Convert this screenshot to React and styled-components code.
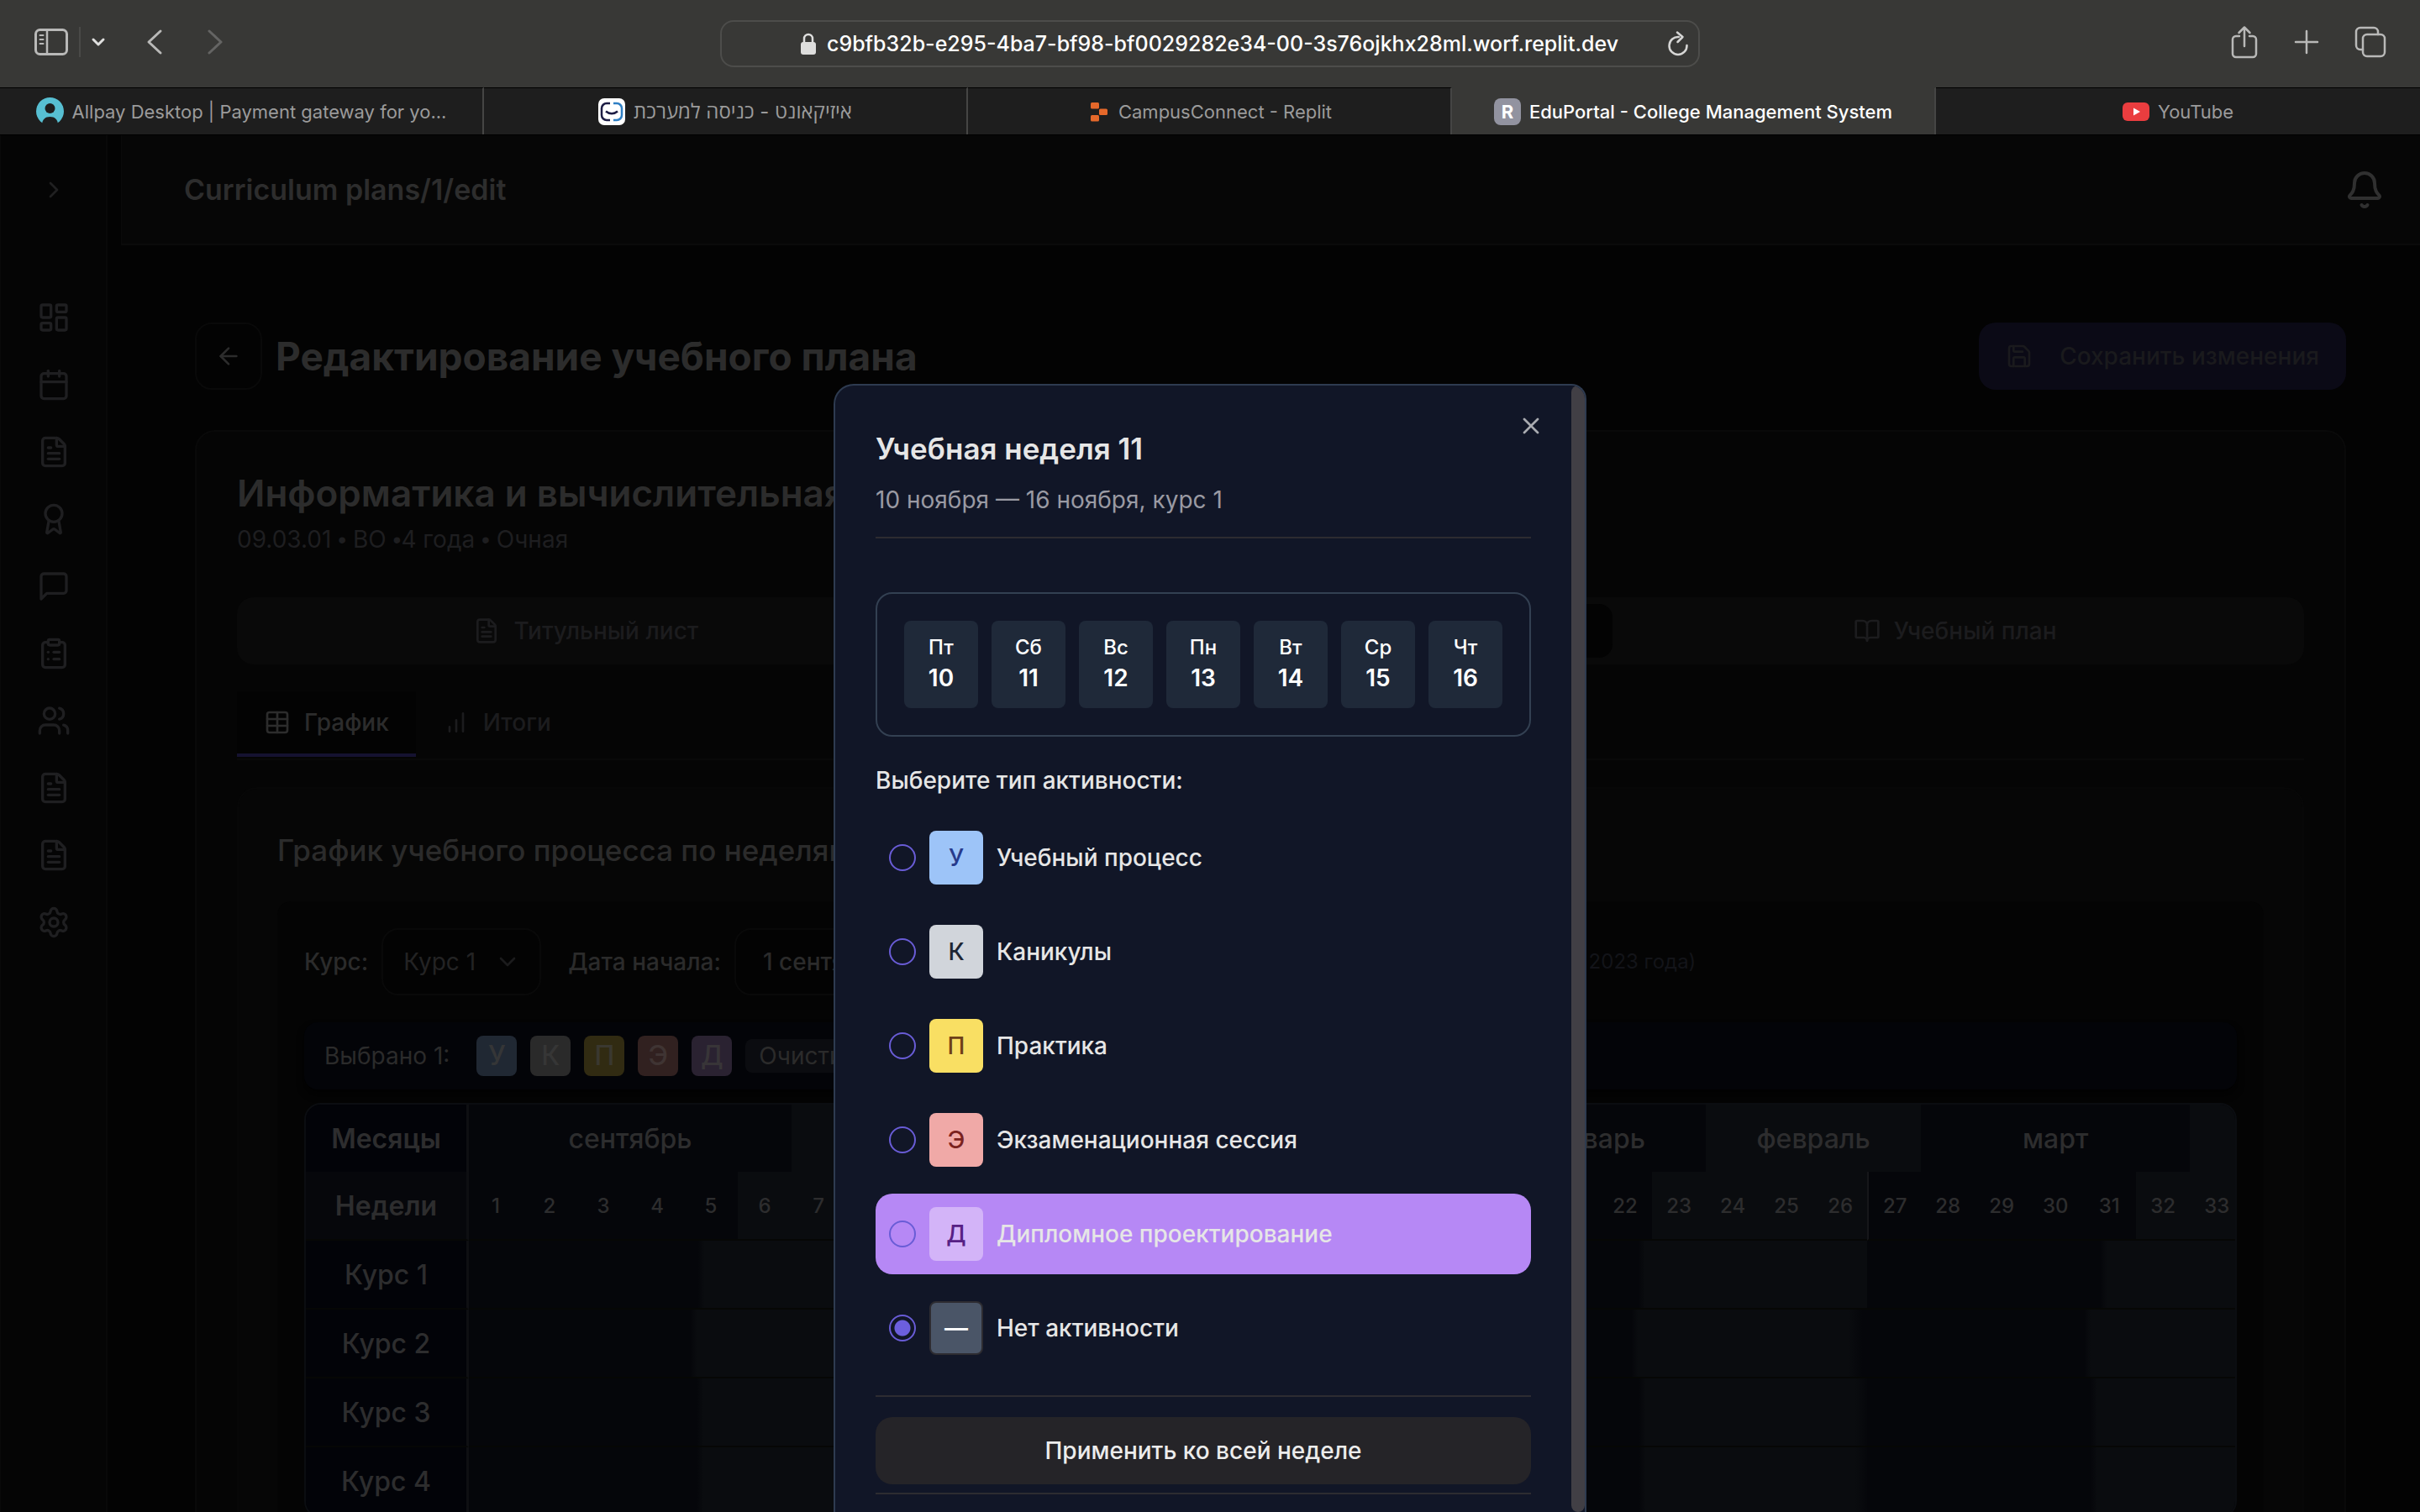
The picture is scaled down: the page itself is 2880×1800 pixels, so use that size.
import React, { useState } from "react";
import styled, { createGlobalStyle, css } from "styled-components";
import {
  ArrowLeft,
  Award,
  Bell,
  BookOpen,
  Calendar,
  CalendarDays,
  ChevronDown,
  ChevronRight,
  ClipboardList,
  FileText,
  LayoutDashboard,
  Save,
  Settings,
  Table as TableIcon,
  Users,
  X,
} from "lucide-react";

const GlobalStyle = createGlobalStyle`
  *, *::before, *::after { box-sizing: border-box; }
  html, body { margin: 0; background: #030303; }
  body, button, input, select {
    font-family: Inter, "Open Sans", "Liberation Sans", sans-serif;
    font-optical-sizing: none;
  }
  button, select { margin: 0; padding: 0; border: 0; background: none; color: inherit; }
  h1, h2, h3, p { margin: 0; }
`;

const Screen = styled.div`
  height: 100vh;
  display: flex;
  flex-direction: column;
  overflow: hidden;
`;

/* ---------- browser window ---------- */

const Toolbar = styled.header`
  flex: none;
  height: 104px;
  padding: 0 40px 4px;
  display: grid;
  grid-template-columns: 1fr minmax(0, 1166px) 1fr;
  align-items: center;
  background: #383836;
  color: #b9b9b8;
  svg { display: block; }
`;

const ToolGroup = styled.div`
  display: flex;
  align-items: center;
  gap: ${(p) => p.$gap}px;
  justify-content: ${(p) => (p.$end ? "flex-end" : "flex-start")};
`;

const ToolButton = styled.button`
  display: flex;
  color: ${(p) => (p.$dim ? "#646463" : "#b9b9b8")};
`;

const ToolDivider = styled.span`
  width: 2px;
  height: 36px;
  background: #4a4a48;
`;

const NavButtons = styled.div`
  display: flex;
  gap: 40px;
  margin-left: 30px;
`;

const AddressBar = styled.div`
  height: 56px;
  margin-top: 4px;
  padding: 0 10px 0 36px;
  display: flex;
  align-items: center;
  border: 2px solid #4d4d4b;
  border-radius: 16px;
  color: #fff;
`;

const Address = styled.div`
  flex: 1;
  display: flex;
  align-items: center;
  justify-content: center;
  gap: 12px;
  font-size: 25px;
  line-height: 32px;
  font-weight: 500;
  white-space: nowrap;
`;

const TabStrip = styled.nav`
  flex: none;
  height: 57px;
  display: grid;
  grid-template-columns: repeat(5, 1fr);
  background: #1e1e1e;
  border-bottom: 1px solid #000;
`;

const BrowserTab = styled.button`
  display: flex;
  align-items: center;
  justify-content: center;
  gap: 10px;
  font-size: ${(p) => (p.$large ? 24 : 22)}px;
  line-height: 28px;
  font-weight: ${(p) => (p.$active ? 500 : 400)};
  white-space: nowrap;
  color: ${(p) => (p.$active ? "#fff" : "#9b9b9b")};
  background: ${(p) => (p.$active ? "#383836" : "transparent")};
  border-top: 1px solid ${(p) => (p.$active ? "#383836" : "#000")};
  border-right: 2px solid #454544;
  &:last-child { border-right: 0; }
  svg { display: block; flex: none; }
`;

const LetterFavicon = styled.span`
  width: 32px;
  height: 32px;
  border-radius: 8px;
  background: #9293a0;
  color: #fff;
  font-size: 22px;
  line-height: 32px;
  font-weight: 700;
  text-align: center;
`;

/* ---------- application frame ---------- */

const Viewport = styled.div`
  position: relative;
  flex: 1;
  min-height: 0;
  display: flex;
  overflow: hidden;
  background: #030303;
`;

const Sidebar = styled.aside`
  flex: none;
  width: 128px;
  display: flex;
  flex-direction: column;
  align-items: center;
  background: #050505;
  border-right: 2px solid #090909;
  border-left: 1px solid #0a0a0a;
  color: #1f1f21;
`;

const CollapseButton = styled.button`
  height: 130px;
  display: flex;
  align-items: center;
  color: #202021;
`;

const SideNav = styled.nav`
  margin-top: 47px;
  display: flex;
  flex-direction: column;
`;

const SideLink = styled.a`
  height: 80px;
  display: flex;
  align-items: center;
  color: inherit;
`;

const Main = styled.main`
  flex: 1;
  min-width: 0;
  margin-left: 16px;
`;

const AppHeader = styled.header`
  height: 131px;
  padding: 0 42px 0 74px;
  display: flex;
  align-items: center;
  justify-content: space-between;
  background: #060606;
  border-bottom: 2px solid #0a0a0a;
  border-left: 1px solid #0a0a0a;
  color: #2d2d2d;
`;

const Crumb = styled.h2`
  font-size: 34px;
  line-height: 48px;
  font-weight: 600;
`;

const BellButton = styled.button`
  display: flex;
  color: #303030;
`;

const Content = styled.div`
  padding: 92px 88px 0;
`;

const TitleRow = styled.div`
  height: 80px;
  display: flex;
  align-items: center;
  gap: 16px;
`;

const BackButton = styled.button`
  width: 80px;
  height: 80px;
  display: flex;
  align-items: center;
  justify-content: center;
  border: 2px solid #090909;
  border-radius: 20px;
  color: #2c2c2c;
`;

const PageTitle = styled.h1`
  flex: 1;
  font-size: 46px;
  line-height: 64px;
  font-weight: 700;
  color: #2c2c2c;
`;

const SaveButton = styled.button`
  height: 80px;
  padding: 0 32px;
  display: flex;
  align-items: center;
  gap: 32px;
  border-radius: 20px;
  background: #0b0a16;
  color: #1a1a1d;
  font-size: 28px;
  line-height: 40px;
  font-weight: 500;
`;

const PlanCard = styled.section`
  margin-top: 48px;
  padding: 48px;
  border: 2px solid #090909;
  border-radius: 24px;
  background: #050505;
`;

const PlanTitle = styled.h2`
  font-size: 44px;
  line-height: 50px;
  font-weight: 600;
  color: #2c2c2c;
`;

const PlanMeta = styled.p`
  margin-top: 10px;
  font-size: 28px;
  line-height: 40px;
  color: #1e1e20;
`;

const Dot = styled.span`
  font-family: "Liberation Sans", sans-serif;
`;

const TabList = styled.div`
  height: 80px;
  margin-top: 48px;
  padding: 8px;
  display: grid;
  grid-template-columns: repeat(3, 1fr);
  border-radius: 20px;
  background: #090909;
`;

const Tab = styled.button`
  display: flex;
  align-items: center;
  justify-content: center;
  gap: 16px;
  border-radius: 16px;
  font-size: 28px;
  line-height: 40px;
  font-weight: 500;
  background: ${(p) => (p.$active ? "#030303" : "transparent")};
  color: ${(p) => (p.$active ? "#2c2c2c" : "#1c1c1e")};
`;

const SubTabList = styled.div`
  margin-top: 32px;
  padding-bottom: 2px;
  display: flex;
  border-bottom: 2px solid #090909;
`;

const SubTab = styled.button`
  height: 78px;
  padding: 0 32px;
  display: flex;
  align-items: center;
  gap: 16px;
  font-size: 28px;
  line-height: 40px;
  font-weight: 500;
  background: ${(p) => (p.$active ? "#030303" : "transparent")};
  border-bottom: 4px solid ${(p) => (p.$active ? "#151230" : "transparent")};
  color: ${(p) => (p.$active ? "#2c2c2c" : "#1c1c1e")};
`;

const ScheduleCard = styled.section`
  margin-top: 32px;
  padding: 48px 46px 0;
  border: 2px solid #070707;
  border-radius: 24px;
  background: #060606;
`;

const ScheduleTitle = styled.h3`
  font-size: 35px;
  line-height: 50px;
  font-weight: 500;
  color: #2b2b2b;
`;

const SchedulePanel = styled.div`
  margin: 36px 0 0;
  padding: 32px;
  border-radius: 16px;
  background: #040404;
`;

const FilterRow = styled.div`
  height: 80px;
  display: flex;
  align-items: center;
  font-size: 28px;
  line-height: 40px;
  font-weight: 500;
  color: #2b2b2b;
  white-space: nowrap;
`;

const SelectBox = styled.div`
  position: relative;
  margin: 0 32px 0 16px;
  color: #232324;
  svg {
    position: absolute;
    right: 24px;
    top: 24px;
    color: #1b1b1c;
    pointer-events: none;
  }
`;

const fieldStyle = css`
  height: 80px;
  border: 2px solid #090909;
  border-radius: 20px;
  background: #030303;
  color: inherit;
  font-size: 28px;
  line-height: 40px;
`;

const CourseSelect = styled.select`
  ${fieldStyle}
  appearance: none;
  width: 190px;
  padding: 0 24px;
`;

const DateButton = styled.button`
  ${fieldStyle}
  width: 860px;
  margin: 0 16px;
  padding: 0 32px;
  text-align: left;
  font-weight: 500;
`;

const Hint = styled.span`
  font-size: 24px;
  font-weight: 400;
  color: #131419;
`;

const SelectionBar = styled.div`
  height: 80px;
  margin-top: 32px;
  padding: 0 24px;
  display: flex;
  align-items: center;
  gap: 16px;
  border-radius: 16px;
  background: #030408;
  box-shadow: 0 6px 8px #020202;
  font-size: 28px;
  line-height: 40px;
  color: #2b2b2b;
`;

const SelectionCount = styled.span`
  margin-right: 16px;
`;

const MiniBadge = styled.button`
  width: 48px;
  height: 48px;
  border-radius: 8px;
  font-size: 32px;
  line-height: 48px;
  font-weight: 500;
  text-align: center;
  background: ${(p) => p.$bg};
  color: ${(p) => p.$fg};
`;

const ClearButton = styled.button`
  height: 40px;
  padding: 0 16px;
  border-radius: 8px;
  background: #0b0c10;
  font-size: 28px;
  line-height: 40px;
`;

const TableFrame = styled.div`
  margin-top: 16px;
  overflow: hidden;
  border: 2px solid #0b0d11;
  border-radius: 20px;
`;

const WeekTable = styled.table`
  table-layout: fixed;
  width: 2498px;
  border-collapse: separate;
  border-spacing: 0;
  font-size: 32px;
  line-height: 40px;
  color: #2d2d2e;
  th, td { padding: 2px 0 0; font-weight: 500; }
`;

const LabelCol = styled.col`
  width: 194px;
`;

const WeekCol = styled.col`
  width: 64px;
`;

const RowLabel = styled.th`
  height: ${(p) => (p.$tall ? 82 : 80)}px;
  background: ${(p) => (p.$raised ? "#06070b" : "#020308")};
  border-right: 3px solid #0e0f12;
  border-bottom: ${(p) => (p.$tall ? "2px solid #060705" : 0)};
  && { font-weight: ${(p) => (p.$strong ? 600 : 500)}; }
`;

const DARK = "#05060a";
const LIGHT = "#0a0c0f";

const MonthCell = styled.th`
  background: ${(p) => (p.$light ? LIGHT : DARK)};
`;

const WeekCell = styled.th`
  font-size: 24px;
  background: ${(p) => (p.$light ? LIGHT : DARK)};
  border-bottom: 2px solid #060705;
  border-left: ${(p) => (p.$mark ? "2px solid #16171a" : 0)};
`;

const DayCell = styled.td`
  background: ${(p) => p.$fill};
  border-bottom: 2px solid #060705;
`;

/* ---------- week dialog ---------- */

const Overlay = styled.div`
  position: absolute;
  inset: 0;
  padding-top: 296px;
  display: flex;
  justify-content: center;
`;

const Dialog = styled.div`
  position: relative;
  width: 896px;
  display: flex;
  overflow: hidden;
  border: 2px solid #2e3b50;
  border-bottom: 0;
  border-radius: 24px 18px 0 0;
  background: #111627;
  color: #e6e6e6;
`;

const DialogBody = styled.div`
  flex: 1;
  padding: 48px 48px 0;
  display: flex;
  flex-direction: column;
`;

const ScrollThumb = styled.div`
  width: 16px;
  border-radius: 8px;
  background: #413f45;
`;

const CloseButton = styled.button`
  position: absolute;
  top: 32px;
  right: 48px;
  display: flex;
  color: #a9abb0;
`;

const DialogHead = styled.div`
  padding-bottom: 24px;
  border-bottom: 2px solid #2d2c31;
`;

const DialogTitle = styled.h2`
  font-size: 35px;
  line-height: 54px;
  font-weight: 600;
`;

const DialogText = styled.p`
  margin-top: 14px;
  font-size: 28px;
  line-height: 40px;
  color: #9a9aa3;
`;

const DayRow = styled.div`
  margin-top: 64px;
  padding: 32px;
  display: grid;
  grid-template-columns: repeat(7, 1fr);
  gap: 16px;
  border: 2px solid #334052;
  border-radius: 20px;
`;

const DayTile = styled.button`
  height: 104px;
  padding: 16px 0;
  display: flex;
  flex-direction: column;
  align-items: center;
  border-radius: 8px;
  background: #1f2939;
  color: #fff;
`;

const DayName = styled.span`
  font-size: 24px;
  line-height: 32px;
  font-weight: 500;
`;

const DayNumber = styled.span`
  font-size: 28px;
  line-height: 40px;
  font-weight: 600;
`;

const ActivityGroup = styled.fieldset`
  margin: 32px 0 0;
  padding: 0;
  border: 0;
  display: flex;
  flex-direction: column;
  gap: 16px;
`;

const ActivityLegend = styled.legend`
  padding: 0;
  margin-bottom: 24px;
  font-size: 28px;
  line-height: 40px;
  font-weight: 500;
`;

const ActivityRow = styled.label`
  height: 96px;
  padding: 16px;
  display: flex;
  align-items: center;
  gap: 16px;
  border-radius: 20px;
  font-size: 28px;
  line-height: 40px;
  font-weight: 500;
  background: ${(p) => (p.$hovered ? "#b688f5" : "transparent")};
`;

const Radio = styled.input`
  appearance: none;
  width: 32px;
  height: 32px;
  margin: 0;
  border: 2px solid #695cd6;
  border-radius: 50%;
  &:checked {
    background: radial-gradient(circle, #6c5fdd 9px, transparent 10px);
  }
`;

const ActivityBadge = styled.span`
  width: 64px;
  height: 64px;
  display: flex;
  align-items: center;
  justify-content: center;
  border-radius: 8px;
  border: ${(p) => (p.$outlined ? "2px solid #2d2c31" : 0)};
  background: ${(p) => p.$bg};
  color: ${(p) => p.$fg};
`;

const DialogFoot = styled.div`
  margin-top: 32px;
  padding: 24px 0 10px;
  border-top: 2px solid #2d2c31;
  border-bottom: 2px solid #2d2c31;
`;

const ApplyButton = styled.button`
  width: 100%;
  height: 80px;
  border-radius: 20px;
  background: #252428;
  color: #ececec;
  font-size: 28px;
  line-height: 40px;
  font-weight: 500;
`;

/* ---------- data ---------- */

const MESSAGE_PATH = "M21 15a2 2 0 0 1-2 2H7l-4 4V5a2 2 0 0 1 2-2h14a2 2 0 0 1 2 2z";

const MessageIcon = () => (
  <svg width="40" height="40" viewBox="0 0 24 24" fill="none" stroke="currentColor" strokeWidth="2" strokeLinecap="round" strokeLinejoin="round">
    <path d={MESSAGE_PATH} />
  </svg>
);

const BarsIcon = () => (
  <svg width="32" height="32" viewBox="0 0 24 24" fill="none" stroke="currentColor" strokeWidth="2" strokeLinecap="round">
    <path d="M12 20V10M18 20V4M6 20v-4" />
  </svg>
);

const sideLinks = [
  ["Панель", LayoutDashboard],
  ["Расписание", Calendar],
  ["Задания", FileText],
  ["Оценки", Award],
  ["Сообщения", MessageIcon],
  ["Заявки", ClipboardList],
  ["Пользователи", Users],
  ["Документы", FileText],
  ["Учебные планы", FileText],
  ["Настройки", Settings],
];

const months = [
  ["сентябрь", 6],
  ["октябрь", 4],
  ["ноябрь", 4],
  ["декабрь", 5],
  ["январь", 4],
  ["февраль", 4],
  ["март", 5],
  ["апрель", 4],
];

const lightWeeks = [[6, 9], [14, 18], [23, 26], [32, 36]];
const isLight = (week) => lightWeeks.some(([from, to]) => week >= from && week <= to);
const weeks = Array.from({ length: 36 }, (_, i) => i + 1);

const toLight = (at) => `linear-gradient(90deg, ${DARK} ${at}%, ${LIGHT} ${at + 12}%)`;
const toDark = (at) => `linear-gradient(90deg, ${LIGHT} ${at}%, ${DARK} ${at + 26}%)`;

const courses = [
  { name: "Курс 1", split: { 5: toLight(26), 22: toLight(75), 31: toLight(34) } },
  { name: "Курс 2", split: { 5: toLight(12), 22: toLight(62), 26: toDark(66), 31: toLight(4) } },
  { name: "Курс 3", split: { 5: toLight(24), 22: toLight(76), 26: toDark(78), 31: toLight(16) } },
  { name: "Курс 4", split: { 5: toLight(24), 22: toLight(76), 26: toDark(78), 31: toLight(16) } },
];

const miniBadges = [
  ["У", "#202833", "#353637"],
  ["К", "#2a2a2a", "#363636"],
  ["П", "#312b12", "#3a3830"],
  ["Э", "#312120", "#3f3433"],
  ["Д", "#2a2231", "#383538"],
];

const days = [["Пт", 10], ["Сб", 11], ["Вс", 12], ["Пн", 13], ["Вт", 14], ["Ср", 15], ["Чт", 16]];

const activities = [
  { code: "У", name: "Учебный процесс", bg: "#9dc4f8", fg: "#273a8c" },
  { code: "К", name: "Каникулы", bg: "#d1d5db", fg: "#1e2633" },
  { code: "П", name: "Практика", bg: "#f9df63", fg: "#6e4018" },
  { code: "Э", name: "Экзаменационная сессия", bg: "#f0a9a7", fg: "#7b2220" },
  { code: "Д", name: "Дипломное проектирование", bg: "#d3b4f8", fg: "#572085", hovered: true },
  { code: "—", name: "Нет активности", bg: "#4a5567", fg: "#ffffff", outlined: true },
];

/* ---------- parts ---------- */

const line = { fill: "none", stroke: "currentColor", strokeLinecap: "round", strokeLinejoin: "round" };

function BrowserBar() {
  return (
    <Toolbar>
      <ToolGroup $gap={12}>
        <ToolButton aria-label="Sidebar">
          <svg width="42" height="34" viewBox="0 0 42 34" {...line} strokeWidth="3">
            <rect x="2.5" y="2.5" width="37" height="29" rx="5" />
            <path d="M16 3v28" strokeWidth="2.5" />
            <path d="M7.5 9h4M7.5 14h4M7.5 19h4" strokeWidth="2" />
          </svg>
        </ToolButton>
        <ToolDivider />
        <ToolButton aria-label="Tab groups">
          <svg width="18" height="12" viewBox="0 0 18 12" {...line} stroke="#e0e0df" strokeWidth="3">
            <path d="M3 3l6 6 6-6" />
          </svg>
        </ToolButton>
        <NavButtons>
          <ToolButton aria-label="Back">
            <svg width="32" height="32" viewBox="0 0 32 32" {...line} strokeWidth="3">
              <path d="M23 3L9 16l14 13" />
            </svg>
          </ToolButton>
          <ToolButton aria-label="Forward" $dim>
            <svg width="32" height="32" viewBox="0 0 32 32" {...line} strokeWidth="3">
              <path d="M9 3l14 13L9 29" />
            </svg>
          </ToolButton>
        </NavButtons>
      </ToolGroup>
      <AddressBar>
        <Address>
          <svg width="20" height="28" viewBox="0 0 20 28">
            <path d="M5 13V8a5 5 0 0 1 10 0v5" fill="none" stroke="#dededd" strokeWidth="2.5" />
            <rect x="1" y="12" width="18" height="15" rx="3" fill="#dededd" />
          </svg>
          c9bfb32b-e295-4ba7-bf98-bf0029282e34-00-3s76ojkhx28ml.worf.replit.dev
        </Address>
        <ToolButton aria-label="Reload">
          <svg width="28" height="32" viewBox="0 0 28 32" {...line} stroke="#d6d6d5" strokeWidth="2.5">
            <path d="M15 8a10.500 10.500 0 1 0 9.500 10" />
            <path d="M13 2.500l6.500 5.500-6 6" />
          </svg>
        </ToolButton>
      </AddressBar>
      <ToolGroup $gap={42} $end>
        <ToolButton aria-label="Share">
          <svg width="34" height="40" viewBox="0 0 34 40" {...line} strokeWidth="2.5">
            <path d="M11 13H7a4 4 0 0 0-4 4v17a4 4 0 0 0 4 4h20a4 4 0 0 0 4-4V17a4 4 0 0 0-4-4h-4" />
            <path d="M17 25V3M10.500 9L17 2.500 23.500 9" />
          </svg>
        </ToolButton>
        <ToolButton aria-label="New tab">
          <svg width="30" height="30" viewBox="0 0 30 30" {...line} strokeWidth="2.5">
            <path d="M15 2v26M2 15h26" />
          </svg>
        </ToolButton>
        <ToolButton aria-label="All tabs">
          <svg width="38" height="38" viewBox="0 0 38 38" {...line} strokeWidth="2.5">
            <rect x="10" y="10" width="26" height="26" rx="5" />
            <path d="M10 28H7a5 5 0 0 1-5-5V7a5 5 0 0 1 5-5h16a5 5 0 0 1 5 5v3" />
          </svg>
        </ToolButton>
      </ToolGroup>
    </Toolbar>
  );
}

function BrowserTabs() {
  return (
    <TabStrip>
      <BrowserTab>
        <svg width="33" height="33" viewBox="0 0 33 33">
          <circle cx="16.500" cy="16.500" r="16.500" fill="#57bfd2" />
          <circle cx="16.500" cy="13" r="6" fill="#1e1e1e" />
          <path d="M7 33c0-7 4-10 9.500-10S26 26 26 33z" fill="#1e1e1e" />
        </svg>
        Allpay Desktop | Payment gateway for yo...
      </BrowserTab>
      <BrowserTab $large>
        <svg width="32" height="32" viewBox="0 0 32 32" fill="none" strokeWidth="2.5">
          <rect width="32" height="32" rx="7" fill="#fff" />
          <path d="M14 6h-4a6 6 0 0 0-6 6v8a6 6 0 0 0 6 6h4" stroke="#1c1c44" />
          <path d="M18 6h4a6 6 0 0 1 6 6v8a6 6 0 0 1-6 6h-4" stroke="#2f7fc4" />
          <path d="M9 15.500c4 3.500 10 3.500 14 0" stroke="#1c1c44" />
        </svg>
        <span dir="rtl">איזיקאונט - כניסה למערכת</span>
      </BrowserTab>
      <BrowserTab>
        <svg width="28" height="28" viewBox="0 0 28 28" fill="#e5682a">
          <rect x="5" y="3" width="10" height="7.500" rx="1.500" />
          <rect x="15" y="10.500" width="10" height="7.500" rx="1.500" />
          <rect x="5" y="18" width="10" height="7.500" rx="1.500" />
        </svg>
        CampusConnect - Replit
      </BrowserTab>
      <BrowserTab $active>
        <LetterFavicon>R</LetterFavicon>
        EduPortal - College Management System
      </BrowserTab>
      <BrowserTab>
        <svg width="32" height="24" viewBox="0 0 32 24">
          <rect y="1" width="32" height="22" rx="6" fill="#ea3d3f" />
          <path d="M13 7.500l8 4.500-8 4.500z" fill="#fff" />
        </svg>
        YouTube
      </BrowserTab>
    </TabStrip>
  );
}

function AppSidebar() {
  return (
    <Sidebar>
      <CollapseButton aria-label="Развернуть меню"><ChevronRight size={32} /></CollapseButton>
      <SideNav>
        {sideLinks.map(([name, Icon]) => (
          <SideLink key={name} href="#" aria-label={name}><Icon size={40} /></SideLink>
        ))}
      </SideNav>
    </Sidebar>
  );
}

function WeekSchedule() {
  return (
    <TableFrame>
      <WeekTable>
        <colgroup>
          <LabelCol />
          {weeks.map((week) => <WeekCol key={week} />)}
        </colgroup>
        <thead>
          <tr>
            <RowLabel scope="row" $strong>Месяцы</RowLabel>
            {months.map(([name, span], i) => (
              <MonthCell key={name} colSpan={span} $light={i % 2 === 1}>{name}</MonthCell>
            ))}
          </tr>
          <tr>
            <RowLabel scope="row" $strong $raised $tall>Недели</RowLabel>
            {weeks.map((week) => (
              <WeekCell key={week} $light={isLight(week)} $mark={week === 27}>{week}</WeekCell>
            ))}
          </tr>
        </thead>
        <tbody>
          {courses.map(({ name, split }) => (
            <tr key={name}>
              <RowLabel scope="row" $tall>{name}</RowLabel>
              {weeks.map((week) => (
                <DayCell key={week} $fill={split[week] || (isLight(week) ? LIGHT : DARK)} />
              ))}
            </tr>
          ))}
        </tbody>
      </WeekTable>
    </TableFrame>
  );
}

function PlanEditor() {
  return (
    <Content>
      <TitleRow>
        <BackButton aria-label="Назад"><ArrowLeft size={32} /></BackButton>
        <PageTitle>Редактирование учебного плана</PageTitle>
        <SaveButton><Save size={32} />Сохранить изменения</SaveButton>
      </TitleRow>
      <PlanCard>
        <PlanTitle>Информатика и вычислительная техника</PlanTitle>
        <PlanMeta>
          09.03.01 <Dot>•</Dot> ВО <Dot>•</Dot>4 года <Dot>•</Dot> Очная
        </PlanMeta>
        <TabList>
          <Tab><FileText size={32} />Титульный лист</Tab>
          <Tab $active><CalendarDays size={32} />Учебный график</Tab>
          <Tab><BookOpen size={32} />Учебный план</Tab>
        </TabList>
        <SubTabList>
          <SubTab $active><TableIcon size={32} />График</SubTab>
          <SubTab><BarsIcon />Итоги</SubTab>
        </SubTabList>
        <ScheduleCard>
          <ScheduleTitle>График учебного процесса по неделям</ScheduleTitle>
          <SchedulePanel>
            <FilterRow>
              <label htmlFor="course">Курс:</label>
              <SelectBox>
                <CourseSelect id="course" defaultValue="1">
                  <option value="1">Курс 1</option>
                  <option value="2">Курс 2</option>
                  <option value="3">Курс 3</option>
                  <option value="4">Курс 4</option>
                </CourseSelect>
                <ChevronDown size={32} />
              </SelectBox>
              <label htmlFor="start">Дата начала:</label>
              <DateButton id="start">1 сентября 2023</DateButton>
              <Hint>(1 сентября 2023 года)</Hint>
            </FilterRow>
            <SelectionBar>
              <SelectionCount>Выбрано 1:</SelectionCount>
              {miniBadges.map(([code, bg, fg]) => (
                <MiniBadge key={code} $bg={bg} $fg={fg}>{code}</MiniBadge>
              ))}
              <ClearButton>Очистить</ClearButton>
            </SelectionBar>
            <WeekSchedule />
          </SchedulePanel>
        </ScheduleCard>
      </PlanCard>
    </Content>
  );
}

function WeekDialog() {
  const [activity, setActivity] = useState("—");
  return (
    <Overlay>
      <Dialog role="dialog" aria-labelledby="week-title">
        <DialogBody>
          <DialogHead>
            <DialogTitle id="week-title">Учебная неделя 11</DialogTitle>
            <DialogText>10 ноября — 16 ноября, курс 1</DialogText>
          </DialogHead>
          <DayRow>
            {days.map(([name, number]) => (
              <DayTile key={number}>
                <DayName>{name}</DayName>
                <DayNumber>{number}</DayNumber>
              </DayTile>
            ))}
          </DayRow>
          <ActivityGroup>
            <ActivityLegend>Выберите тип активности:</ActivityLegend>
            {activities.map((item) => (
              <ActivityRow key={item.code} $hovered={item.hovered}>
                <Radio
                  type="radio"
                  name="activity"
                  checked={activity === item.code}
                  onChange={() => setActivity(item.code)}
                />
                <ActivityBadge $bg={item.bg} $fg={item.fg} $outlined={item.outlined}>{item.code}</ActivityBadge>
                {item.name}
              </ActivityRow>
            ))}
          </ActivityGroup>
          <DialogFoot>
            <ApplyButton>Применить ко всей неделе</ApplyButton>
          </DialogFoot>
        </DialogBody>
        <ScrollThumb />
        <CloseButton aria-label="Закрыть"><X size={32} /></CloseButton>
      </Dialog>
    </Overlay>
  );
}

export default function App() {
  return (
    <Screen>
      <GlobalStyle />
      <BrowserBar />
      <BrowserTabs />
      <Viewport>
        <AppSidebar />
        <Main>
          <AppHeader>
            <Crumb>Curriculum plans/1/edit</Crumb>
            <BellButton aria-label="Уведомления"><Bell size={48} /></BellButton>
          </AppHeader>
          <PlanEditor />
        </Main>
        <WeekDialog />
      </Viewport>
    </Screen>
  );
}
